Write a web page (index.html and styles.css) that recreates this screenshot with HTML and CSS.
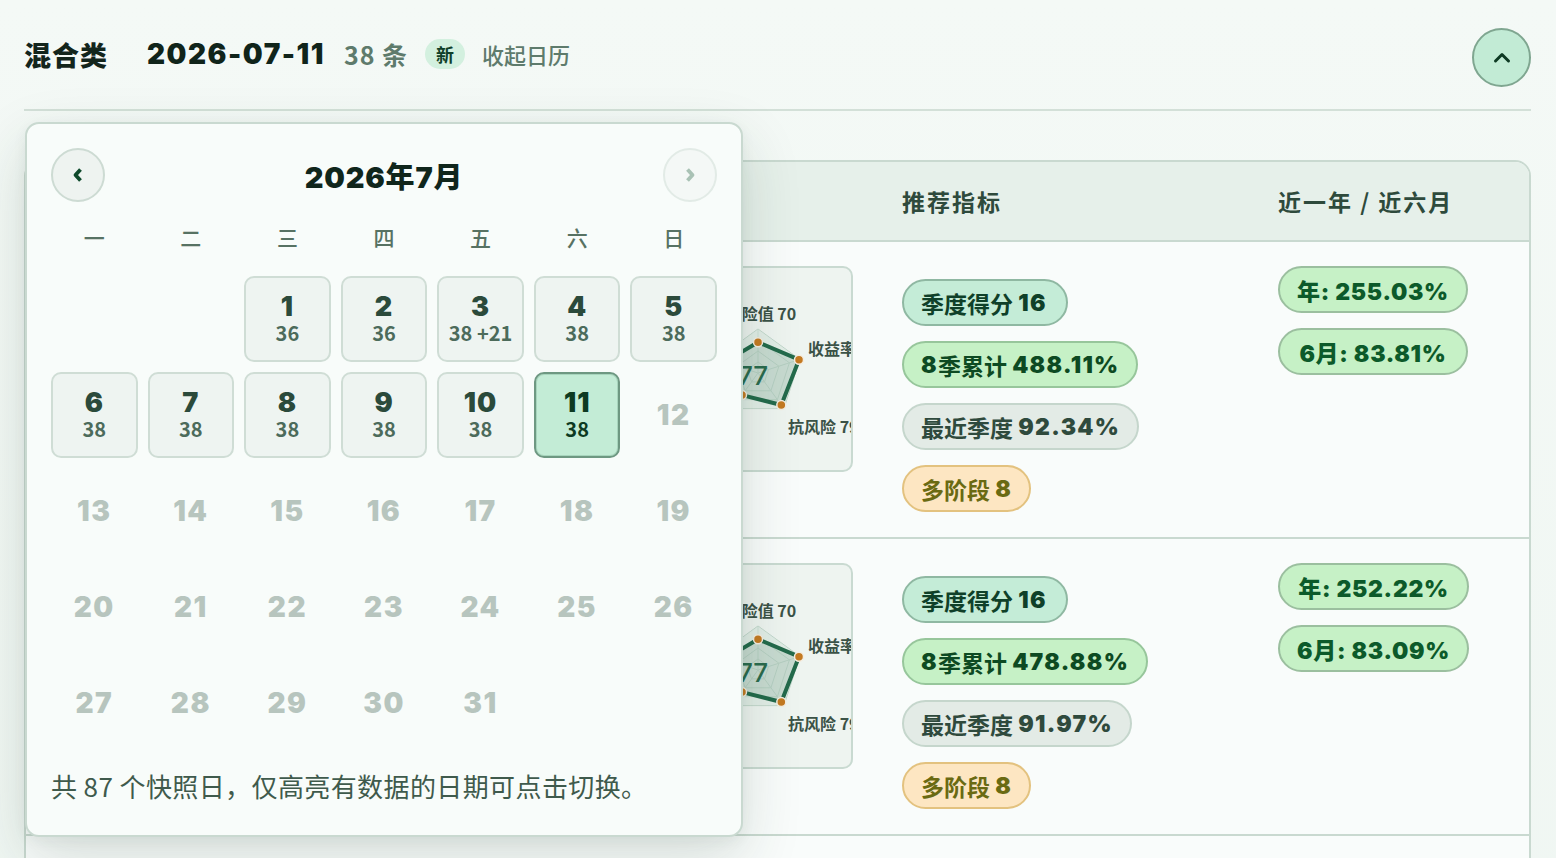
FILE: index.html
```html
<!DOCTYPE html>
<html lang="zh-CN">
<head>
    <meta charset="UTF-8">
    <meta name="viewport" content="width=device-width, initial-scale=1.0">
    <title>混合类 快照日历</title>
    <link rel="stylesheet" href="styles.css">
</head>
<body>
    <div class="page">
        <header class="topbar">
            <div class="topbar-info">
                <h1 class="category">混合类</h1>
                <span class="cur-date">2026-07-11</span>
                <span class="count">38 条</span>
                <span class="badge-new">新</span>
                <button class="link-btn">收起日历</button>
            </div>
            <button class="round-btn" aria-label="收起">
                <svg width="20" height="20" viewBox="0 0 20 20"><path d="M3.5 13 L10 6.5 L16.5 13" fill="none" stroke="#0e3a24" stroke-width="3" stroke-linecap="round" stroke-linejoin="round"/></svg>
            </button>
        </header>

        <div class="board">
            <!-- calendar popover -->
            <div class="calendar">
                <div class="cal-nav">
                    <button class="nav-btn" aria-label="上个月">
                        <svg width="20" height="20" viewBox="0 0 20 20"><path d="M12.5 4.5 L7.5 10 L12.5 15.5" fill="none" stroke="#0f4a2c" stroke-width="3.8" stroke-linejoin="round"/></svg>
                    </button>
                    <div class="cal-title">2026年7月</div>
                    <button class="nav-btn disabled" aria-label="下个月">
                        <svg width="20" height="20" viewBox="0 0 20 20"><path d="M7.5 4.5 L12.5 10 L7.5 15.5" fill="none" stroke="#a9c2b5" stroke-width="3.8" stroke-linejoin="round"/></svg>
                    </button>
                </div>
                <div class="weekdays">
                    <span>一</span><span>二</span><span>三</span><span>四</span><span>五</span><span>六</span><span>日</span>
                </div>
                <div class="days">
                    <span class="day empty"></span>
                    <span class="day empty"></span>
                    <button class="day has"><b>1</b><small>36</small></button>
                    <button class="day has"><b>2</b><small>36</small></button>
                    <button class="day has"><b>3</b><small>38 +21</small></button>
                    <button class="day has"><b>4</b><small>38</small></button>
                    <button class="day has"><b>5</b><small>38</small></button>
                    <button class="day has"><b>6</b><small>38</small></button>
                    <button class="day has"><b>7</b><small>38</small></button>
                    <button class="day has"><b>8</b><small>38</small></button>
                    <button class="day has"><b>9</b><small>38</small></button>
                    <button class="day has"><b>10</b><small>38</small></button>
                    <button class="day has active"><b>11</b><small>38</small></button>
                    <span class="day off">12</span>
                    <span class="day off">13</span>
                    <span class="day off">14</span>
                    <span class="day off">15</span>
                    <span class="day off">16</span>
                    <span class="day off">17</span>
                    <span class="day off">18</span>
                    <span class="day off">19</span>
                    <span class="day off">20</span>
                    <span class="day off">21</span>
                    <span class="day off">22</span>
                    <span class="day off">23</span>
                    <span class="day off">24</span>
                    <span class="day off">25</span>
                    <span class="day off">26</span>
                    <span class="day off">27</span>
                    <span class="day off">28</span>
                    <span class="day off">29</span>
                    <span class="day off">30</span>
                    <span class="day off">31</span>
                </div>
                <p class="cal-note">共 87 个快照日，仅高亮有数据的日期可点击切换。</p>
            </div>

            <div class="table">
                <div class="table-head">
                    <span>#</span>
                    <span>基金</span>
                    <span>雷达</span>
                    <span>推荐指标</span>
                    <span>近一年 / 近六月</span>
                </div>

                <div class="row">
                    <div class="cell rank">1</div>
                    <div class="cell fund">
                        <div class="fund-name">永赢先进制造智选混合A</div>
                        <div class="fund-code">018124</div>
                    </div>
                    <div class="cell">
                        <div class="radar-card">
                            <svg class="radar" width="203" height="206" viewBox="0 0 203 206">
                                <g fill="none" stroke="#bcd3c6" stroke-width="1">
                                    <polygon points="108,63 149.8,93.4 133.9,142.6 82.1,142.6 66.2,93.4"/>
                                    <polygon points="108,74 139.4,96.8 127.4,133.7 88.6,133.7 76.6,96.8"/>
                                    <polygon points="108,85 128.9,100.2 120.9,124.8 95.1,124.8 87.1,100.2"/>
                                    <polygon points="108,96 118.5,103.6 114.5,115.9 101.5,115.9 97.5,103.6"/>
                                    <path d="M108 107 L108 63 M108 107 L149.8 93.4 M108 107 L133.9 142.6 M108 107 L82.1 142.6 M108 107 L66.2 93.4"/>
                                </g>
                                <polygon points="108,63 149.8,93.4 133.9,142.6 82.1,142.6 66.2,93.4" fill="#d7e8de" opacity="0.55"/>
                                <polygon points="108,76.2 149,93.7 131.3,139 92,129.1 74.5,96.1" fill="#2a6a4d" fill-opacity="0.14" stroke="#236a4b" stroke-width="4" stroke-linejoin="round"/>
                                <g fill="#c47a22" stroke="#f3ece0" stroke-width="1.5">
                                    <circle cx="108" cy="76.2" r="4.5"/>
                                    <circle cx="149" cy="93.7" r="4.5"/>
                                    <circle cx="131.3" cy="139" r="4.5"/>
                                    <circle cx="92" cy="129.1" r="4.5"/>
                                    <circle cx="74.5" cy="96.1" r="4.5"/>
                                </g>
                                <text x="103" y="119" class="radar-score">77</text>
                                <g class="radar-label">
                                    <text x="111" y="54" text-anchor="middle">风险值 70</text>
                                    <text x="158" y="89">收益率 98</text>
                                    <text x="138" y="167">抗风险 79</text>
                                    <text x="80" y="167" text-anchor="end">稳定性 62</text>
                                    <text x="60" y="89" text-anchor="end">回撤 80</text>
                                </g>
                            </svg>
                        </div>
                    </div>
                    <div class="cell">
                        <div class="pill-list">
                            <span class="pill pill-score">季度得分&nbsp;<b>16</b></span>
                            <span class="pill pill-cum"><b>8</b>季累计&nbsp;<b>488.11%</b></span>
                            <span class="pill pill-recent">最近季度&nbsp;<b>92.34%</b></span>
                            <span class="pill pill-multi">多阶段&nbsp;<b>8</b></span>
                        </div>
                    </div>
                    <div class="cell">
                        <div class="ret-list">
                            <span class="pill pill-ret">年: 255.03%</span>
                            <span class="pill pill-ret">6月: 83.81%</span>
                        </div>
                    </div>
                </div>

                <div class="row">
                    <div class="cell rank">2</div>
                    <div class="cell fund">
                        <div class="fund-name">永赢先进制造智选混合C</div>
                        <div class="fund-code">018125</div>
                    </div>
                    <div class="cell">
                        <div class="radar-card">
                            <svg class="radar" width="203" height="206" viewBox="0 0 203 206">
                                <g fill="none" stroke="#bcd3c6" stroke-width="1">
                                    <polygon points="108,63 149.8,93.4 133.9,142.6 82.1,142.6 66.2,93.4"/>
                                    <polygon points="108,74 139.4,96.8 127.4,133.7 88.6,133.7 76.6,96.8"/>
                                    <polygon points="108,85 128.9,100.2 120.9,124.8 95.1,124.8 87.1,100.2"/>
                                    <polygon points="108,96 118.5,103.6 114.5,115.9 101.5,115.9 97.5,103.6"/>
                                    <path d="M108 107 L108 63 M108 107 L149.8 93.4 M108 107 L133.9 142.6 M108 107 L82.1 142.6 M108 107 L66.2 93.4"/>
                                </g>
                                <polygon points="108,63 149.8,93.4 133.9,142.6 82.1,142.6 66.2,93.4" fill="#d7e8de" opacity="0.55"/>
                                <polygon points="108,76.2 149,93.7 131.3,139 92,129.1 74.5,96.1" fill="#2a6a4d" fill-opacity="0.14" stroke="#236a4b" stroke-width="4" stroke-linejoin="round"/>
                                <g fill="#c47a22" stroke="#f3ece0" stroke-width="1.5">
                                    <circle cx="108" cy="76.2" r="4.5"/>
                                    <circle cx="149" cy="93.7" r="4.5"/>
                                    <circle cx="131.3" cy="139" r="4.5"/>
                                    <circle cx="92" cy="129.1" r="4.5"/>
                                    <circle cx="74.5" cy="96.1" r="4.5"/>
                                </g>
                                <text x="103" y="119" class="radar-score">77</text>
                                <g class="radar-label">
                                    <text x="111" y="54" text-anchor="middle">风险值 70</text>
                                    <text x="158" y="89">收益率 97</text>
                                    <text x="138" y="167">抗风险 79</text>
                                    <text x="80" y="167" text-anchor="end">稳定性 62</text>
                                    <text x="60" y="89" text-anchor="end">回撤 80</text>
                                </g>
                            </svg>
                        </div>
                    </div>
                    <div class="cell">
                        <div class="pill-list">
                            <span class="pill pill-score">季度得分&nbsp;<b>16</b></span>
                            <span class="pill pill-cum"><b>8</b>季累计&nbsp;<b>478.88%</b></span>
                            <span class="pill pill-recent">最近季度&nbsp;<b>91.97%</b></span>
                            <span class="pill pill-multi">多阶段&nbsp;<b>8</b></span>
                        </div>
                    </div>
                    <div class="cell">
                        <div class="ret-list">
                            <span class="pill pill-ret">年: 252.22%</span>
                            <span class="pill pill-ret">6月: 83.09%</span>
                        </div>
                    </div>
                </div>

                <div class="row">
                    <div class="cell rank">3</div>
                    <div class="cell fund">
                        <div class="fund-name">信澳业绩驱动混合A</div>
                        <div class="fund-code">002212</div>
                    </div>
                    <div class="cell">
                        <div class="radar-card"></div>
                    </div>
                    <div class="cell">
                        <div class="pill-list">
                            <span class="pill pill-score">季度得分&nbsp;<b>15</b></span>
                        </div>
                    </div>
                    <div class="cell">
                        <div class="ret-list">
                            <span class="pill pill-ret">年: 198.40%</span>
                        </div>
                    </div>
                </div>
            </div>
        </div>
    </div>
</body>
</html>
```

FILE: styles.css
```css
body {
    margin: 0;
    font-family: "Noto Sans CJK SC", sans-serif;
    color: #1c3328;
    background: linear-gradient(180deg, #f4f9f6 0%, #eff6f2 100%);
    min-height: 100vh;
}

button {
    font-family: inherit;
    cursor: pointer;
}

.page {
    padding: 28px 25px 0 24px;
}

/* top bar */
.topbar {
    display: flex;
    align-items: center;
    justify-content: space-between;
    padding-bottom: 22px;
    border-bottom: 2px solid #d3e0d8;
}

.topbar-info {
    display: flex;
    align-items: center;
    gap: 17px;
    padding-bottom: 7px;
}

.category {
    margin: 0 22px 0 0;
    font-size: 27px;
    font-weight: 900;
    color: #13251c;
    letter-spacing: 1px;
}

.cur-date {
    font-family: "Inter", "Noto Sans CJK SC", sans-serif;
    font-size: 28px;
    font-weight: 900;
    color: #10241a;
    letter-spacing: 1.5px;
}

.count {
    margin-left: 2px;
    font-size: 25px;
    font-weight: 700;
    color: #5e7b6c;
    letter-spacing: 1px;
}

.badge-new {
    display: inline-flex;
    align-items: center;
    justify-content: center;
    width: 40px;
    height: 30px;
    border-radius: 15px;
    background-color: #d3f0df;
    color: #0f4029;
    font-size: 18px;
    font-weight: 700;
}

.link-btn {
    border: none;
    background: none;
    padding: 0;
    font-size: 22px;
    font-weight: 500;
    color: #5e7b6c;
}

.round-btn {
    width: 59px;
    height: 59px;
    border-radius: 50%;
    border: 2px solid #7fa690;
    background-color: #c2ebd5;
    display: flex;
    align-items: center;
    justify-content: center;
    padding: 0;
}

/* board */
.board {
    position: relative;
    padding-top: 49px;
}

.calendar {
    position: absolute;
    top: 11px;
    left: 1px;
    z-index: 5;
    width: 718px;
    box-sizing: border-box;
    padding: 24px 24px 31px;
    background-color: #f8fcfa;
    border: 2px solid #c9d9d0;
    border-radius: 14px;
    box-shadow: 0 22px 60px rgba(28, 64, 46, 0.16), 0 4px 14px rgba(28, 64, 46, 0.06);
}

.cal-nav {
    display: flex;
    align-items: center;
    justify-content: space-between;
    height: 54px;
}

.nav-btn {
    width: 54px;
    height: 54px;
    border-radius: 50%;
    border: 2px solid #cddbd3;
    background-color: #eef3f0;
    display: flex;
    align-items: center;
    justify-content: center;
    padding: 0;
}

.nav-btn.disabled {
    border-color: #e2ebe6;
    background-color: #f4f8f6;
    cursor: default;
}

.cal-title {
    font-family: "Inter", "Noto Sans CJK SC", sans-serif;
    font-size: 29px;
    font-weight: 900;
    color: #10261c;
    letter-spacing: 0.8px;
}

.weekdays {
    display: grid;
    grid-template-columns: repeat(7, 1fr);
    gap: 10px;
    margin-top: 22px;
    height: 26px;
    line-height: 26px;
    text-align: center;
    font-size: 21px;
    font-weight: 500;
    color: #577263;
}

.days {
    display: grid;
    grid-template-columns: repeat(7, 1fr);
    grid-auto-rows: 86px;
    gap: 10px;
    margin-top: 26px;
}

.day {
    display: flex;
    flex-direction: column;
    align-items: center;
    justify-content: center;
    box-sizing: border-box;
    border-radius: 10px;
    padding: 0;
}

.day b {
    font-family: "Inter", sans-serif;
    font-size: 27px;
    font-weight: 900;
    line-height: 28px;
    letter-spacing: 1px;
    color: #2b4a3b;
}

.day small {
    font-size: 20px;
    font-weight: 700;
    line-height: 24px;
    color: #4c6b5b;
}

.day.has {
    border: 2px solid #cfddd5;
    background-color: #eef4f1;
}

.day.active {
    border-color: #6e9882;
    background-color: #c3ecd6;
    box-shadow: inset 0 0 0 1px #a7d5bd;
}

.day.active b,
.day.active small {
    color: #0d3a22;
}

.day.off {
    font-family: "Inter", sans-serif;
    font-size: 28px;
    font-weight: 900;
    letter-spacing: 1.5px;
    color: #b7c5be;
}

.cal-note {
    margin: 22px 0 0;
    font-size: 26px;
    line-height: 36px;
    letter-spacing: 0.4px;
    color: #3f5a4c;
}

/* table */
.table {
    border: 2px solid #c9d9d0;
    border-radius: 16px;
    background-color: #f9fcfb;
    overflow: hidden;
}

.table-head,
.row {
    display: grid;
    grid-template-columns: 100px 500px 252px 376px 1fr;
}

.table-head {
    height: 78px;
    align-items: center;
    background-color: #e6f0ea;
    border-bottom: 2px solid #c9d9d0;
}

.table-head span {
    padding: 0 24px;
    font-size: 23px;
    font-weight: 700;
    letter-spacing: 2px;
    color: #2e4a3c;
}

.row {
    border-bottom: 2px solid #c9d9d0;
}

.cell {
    padding: 24px 24px 25px;
}

.rank {
    font-family: "Inter", sans-serif;
    font-size: 22px;
    font-weight: 900;
    color: #2b4a3b;
}

.fund-name {
    font-size: 22px;
    font-weight: 700;
    color: #1c3328;
}

.fund-code {
    margin-top: 6px;
    font-size: 17px;
    color: #5e7b6c;
}

.radar-card {
    width: 203px;
    height: 206px;
    box-sizing: border-box;
    border: 2px solid #c9dad1;
    border-radius: 10px;
    background-color: #eef4f0;
    overflow: hidden;
}

.radar {
    display: block;
    margin: -2px;
}

.radar-label text {
    font-family: "Noto Sans CJK SC", sans-serif;
    font-size: 16px;
    font-weight: 700;
    fill: #3b5247;
}

.radar-score {
    font-family: "Inter", sans-serif;
    font-size: 26px;
    font-weight: 500;
    fill: #2a6a4d;
    text-anchor: middle;
}

/* pills */
.pill-list {
    display: flex;
    flex-direction: column;
    align-items: flex-start;
    gap: 15px;
    margin-top: 13px;
}

.ret-list {
    display: inline-flex;
    flex-direction: column;
    gap: 15px;
}

.pill {
    display: inline-flex;
    align-items: center;
    height: 47px;
    box-sizing: border-box;
    padding: 0 17px;
    border: 2px solid;
    border-radius: 24px;
    font-size: 23px;
    font-weight: 700;
    white-space: nowrap;
}

.pill b {
    font-family: "Inter", sans-serif;
    font-weight: 900;
    letter-spacing: 1.3px;
}

.pill-score {
    padding-right: 19px;
    background-color: #c4ecd7;
    border-color: #8fb8a2;
    color: #0f4029;
}

.pill-cum {
    background-color: #c6f1c6;
    border-color: #97c69b;
    color: #0d4a22;
}

.pill-recent {
    background-color: #e3ebe6;
    border-color: #c5d6cc;
    color: #2f4a3d;
}

.pill-multi {
    background-color: #fde6c2;
    border-color: #e3c27f;
    color: #6a6a12;
}

.pill-ret {
    justify-content: center;
    background-color: #c6f1c6;
    border-color: #9bbf9f;
    color: #0c5a2a;
    font-family: "Inter", "Noto Sans CJK SC", sans-serif;
    font-weight: 900;
    letter-spacing: 0.7px;
}
```
